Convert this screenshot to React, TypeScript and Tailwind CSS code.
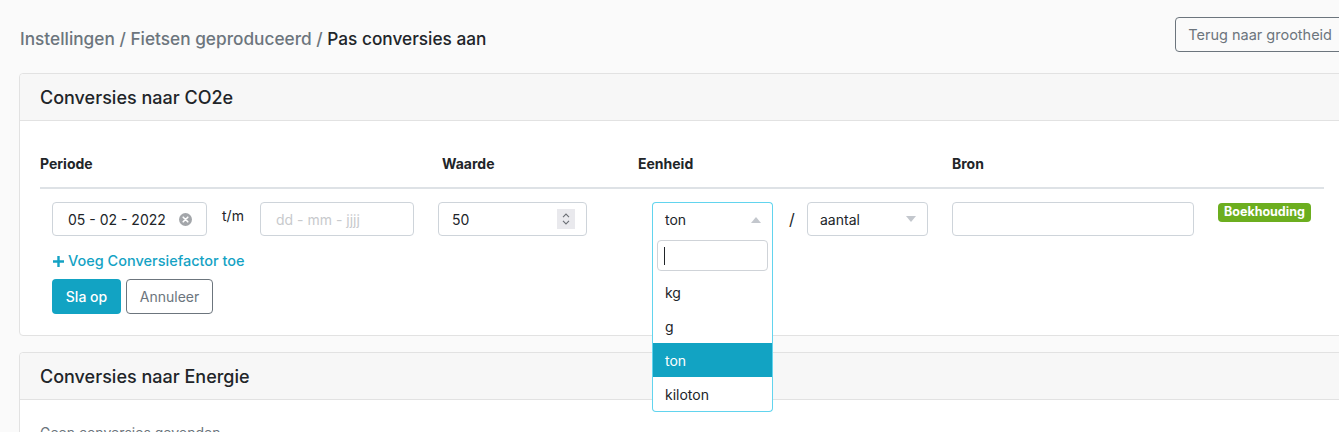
import React from "react";

function Caret({ up }: { up?: boolean }) {
  return (
    <svg width="10" height="6" viewBox="0 0 10 6" className="block">
      {up ? (
        <path d="M0 6 L5 0 L10 6 Z" fill="#c3c7cd" />
      ) : (
        <path d="M0 0 L5 6 L10 0 Z" fill="#c3c7cd" />
      )}
    </svg>
  );
}

export default function App() {
  return (
    <div
      className="w-[1339px] h-[432px] overflow-hidden bg-[#fafafa] text-[#212529]"
      style={{ fontFamily: "Inter, 'Noto Sans', 'Liberation Sans', sans-serif" }}
    >
      <div className="ml-[19px] w-[1326px]">
        {/* top bar */}
        <div className="flex items-start justify-between pt-[17px]">
          <div className="mt-[10px] pl-px text-[17.25px] leading-[24px] font-medium">
            <span className="text-[#6c757d]">Instellingen</span>
            <span className="text-[#6c757d]"> / </span>
            <span className="text-[#6c757d]">Fietsen geproduceerd</span>
            <span className="text-[#6c757d]"> / </span>
            <span>Pas conversies aan</span>
          </div>
          <button className="h-[35px] px-[12px] rounded-[4px] border border-[#6c757d] text-[14.5px] text-[#6c757d]">
            Terug naar grootheid
          </button>
        </div>

        {/* card 1 */}
        <div className="mt-[21px] border border-[#e2e2e2] rounded-[4px] bg-white">
          <div className="h-[47px] bg-[#f7f7f7] border-b border-[#e2e2e2] rounded-t-[4px] px-[20px] flex items-center text-[18px] font-medium">
            Conversies naar CO2e
          </div>
          <div className="px-[20px] pb-[21px]">
            <div className="pt-[31px] pb-[11px] border-b-2 border-[#dee2e6] grid grid-cols-[402px_196px_314px_1fr] text-[14px] font-bold leading-[24px]">
              <div>Periode</div>
              <div>Waarde</div>
              <div>Eenheid</div>
              <div>Bron</div>
            </div>

            {/* row */}
            <div className="pt-[13px] flex items-start text-[14px]">
              <div className="ml-[12px] w-[155px] h-[34px] border border-[#ced4da] rounded-[4px] flex items-center pl-[15px] pr-[14px] justify-between">
                <span>05 - 02 - 2022</span>
                <svg width="13" height="13" viewBox="0 0 13 13">
                  <circle cx="6.5" cy="6.5" r="6.5" fill="#a3a6aa" />
                  <path d="M4.2 4.2 L8.8 8.8 M8.8 4.2 L4.2 8.8" stroke="white" strokeWidth="1.6" strokeLinecap="round" />
                </svg>
              </div>
              <div className="w-[53px] pl-[15px] mt-[4px] leading-[20px]">t/m</div>
              <div className="w-[154px] h-[34px] border border-[#ced4da] rounded-[4px] flex items-center pl-[15px] text-[#c8cacd]">
                dd - mm - jjjj
              </div>
              <div className="ml-[24px] w-[149px] h-[34px] border border-[#ced4da] rounded-[4px] flex items-center pl-[13px] pr-[11px] justify-between">
                <span>50</span>
                <div className="w-[18px] h-[20px] bg-[#e9e9ed] flex flex-col items-center justify-center gap-[2px]">
                  <svg width="8" height="5" viewBox="0 0 8 5">
                    <path d="M1 4.2 L4 1 L7 4.2" stroke="#6b6f75" strokeWidth="1.1" fill="none" />
                  </svg>
                  <svg width="8" height="5" viewBox="0 0 8 5">
                    <path d="M1 0.8 L4 4 L7 0.8" stroke="#6b6f75" strokeWidth="1.1" fill="none" />
                  </svg>
                </div>
              </div>

              {/* open select */}
              <div className="ml-[65px] w-[121px] relative">
                <div className="h-[34px] border border-b-0 border-[#62d4ee] rounded-t-[4px] flex items-center justify-between pl-[12px] pr-[11px]">
                  <span>ton</span>
                  <Caret up />
                </div>
                <div className="absolute left-0 right-0 top-[34px] z-10 bg-white border border-t-0 border-[#62d4ee] rounded-b-[4px] pt-[4px]">
                  <div className="mx-[4px] h-[31px] border border-[#cfd3d8] rounded-[4px] flex items-center pl-[6px]">
                    <div className="w-px h-[18px] bg-[#212529]" />
                  </div>
                  <div className="mt-[4px]">
                    <div className="h-[34px] flex items-center pl-[12px]">kg</div>
                    <div className="h-[34px] flex items-center pl-[12px]">g</div>
                    <div className="h-[34px] flex items-center pl-[12px] bg-[#12a3c3] text-white">ton</div>
                    <div className="h-[34px] flex items-center pl-[12px]">kiloton</div>
                  </div>
                </div>
              </div>

              <div className="w-[34px] pl-[16px] h-[34px] flex items-center text-[16px]">/</div>
              <div className="w-[121px] h-[34px] border border-[#ced4da] rounded-[4px] flex items-center justify-between pl-[12px] pr-[11px]">
                <span>aantal</span>
                <Caret />
              </div>
              <div className="ml-[24px] w-[242px] h-[34px] border border-[#ced4da] rounded-[4px]" />
              <div className="ml-[24px] mt-[1px] h-[19px] px-[6px] rounded-[4px] bg-[#6cae1f] text-white text-[12.5px] font-bold flex items-center">
                Boekhouding
              </div>
            </div>

            <div className="mt-[15px] ml-[12px] h-[20px] flex items-center gap-[3px] text-[14.5px] font-medium text-[#14a2c4]">
              <svg width="13" height="13" viewBox="0 0 13 13">
                <path d="M6.5 1 V12 M1 6.5 H12" stroke="#14a2c4" strokeWidth="2.4" />
              </svg>
              <span>Voeg Conversiefactor toe</span>
            </div>

            <div className="mt-[8px] ml-[12px] flex gap-[5px] text-[14px]">
              <button className="h-[35px] w-[69px] rounded-[4px] bg-[#12a3c3] text-white font-medium">Sla op</button>
              <button className="h-[35px] w-[87px] rounded-[4px] border border-[#6c757d] text-[#6c757d]">Annuleer</button>
            </div>
          </div>
        </div>

        {/* card 2 */}
        <div className="mt-[16px] border border-[#e2e2e2] rounded-[4px] bg-white">
          <div className="h-[47px] bg-[#f7f7f7] border-b border-[#e2e2e2] rounded-t-[4px] px-[20px] flex items-center text-[18px] font-medium">
            Conversies naar Energie
          </div>
          <div className="px-[20px] pt-[22px] pb-[20px] text-[14px] text-[#6c757d]">Geen conversies gevonden</div>
        </div>
      </div>
    </div>
  );
}
